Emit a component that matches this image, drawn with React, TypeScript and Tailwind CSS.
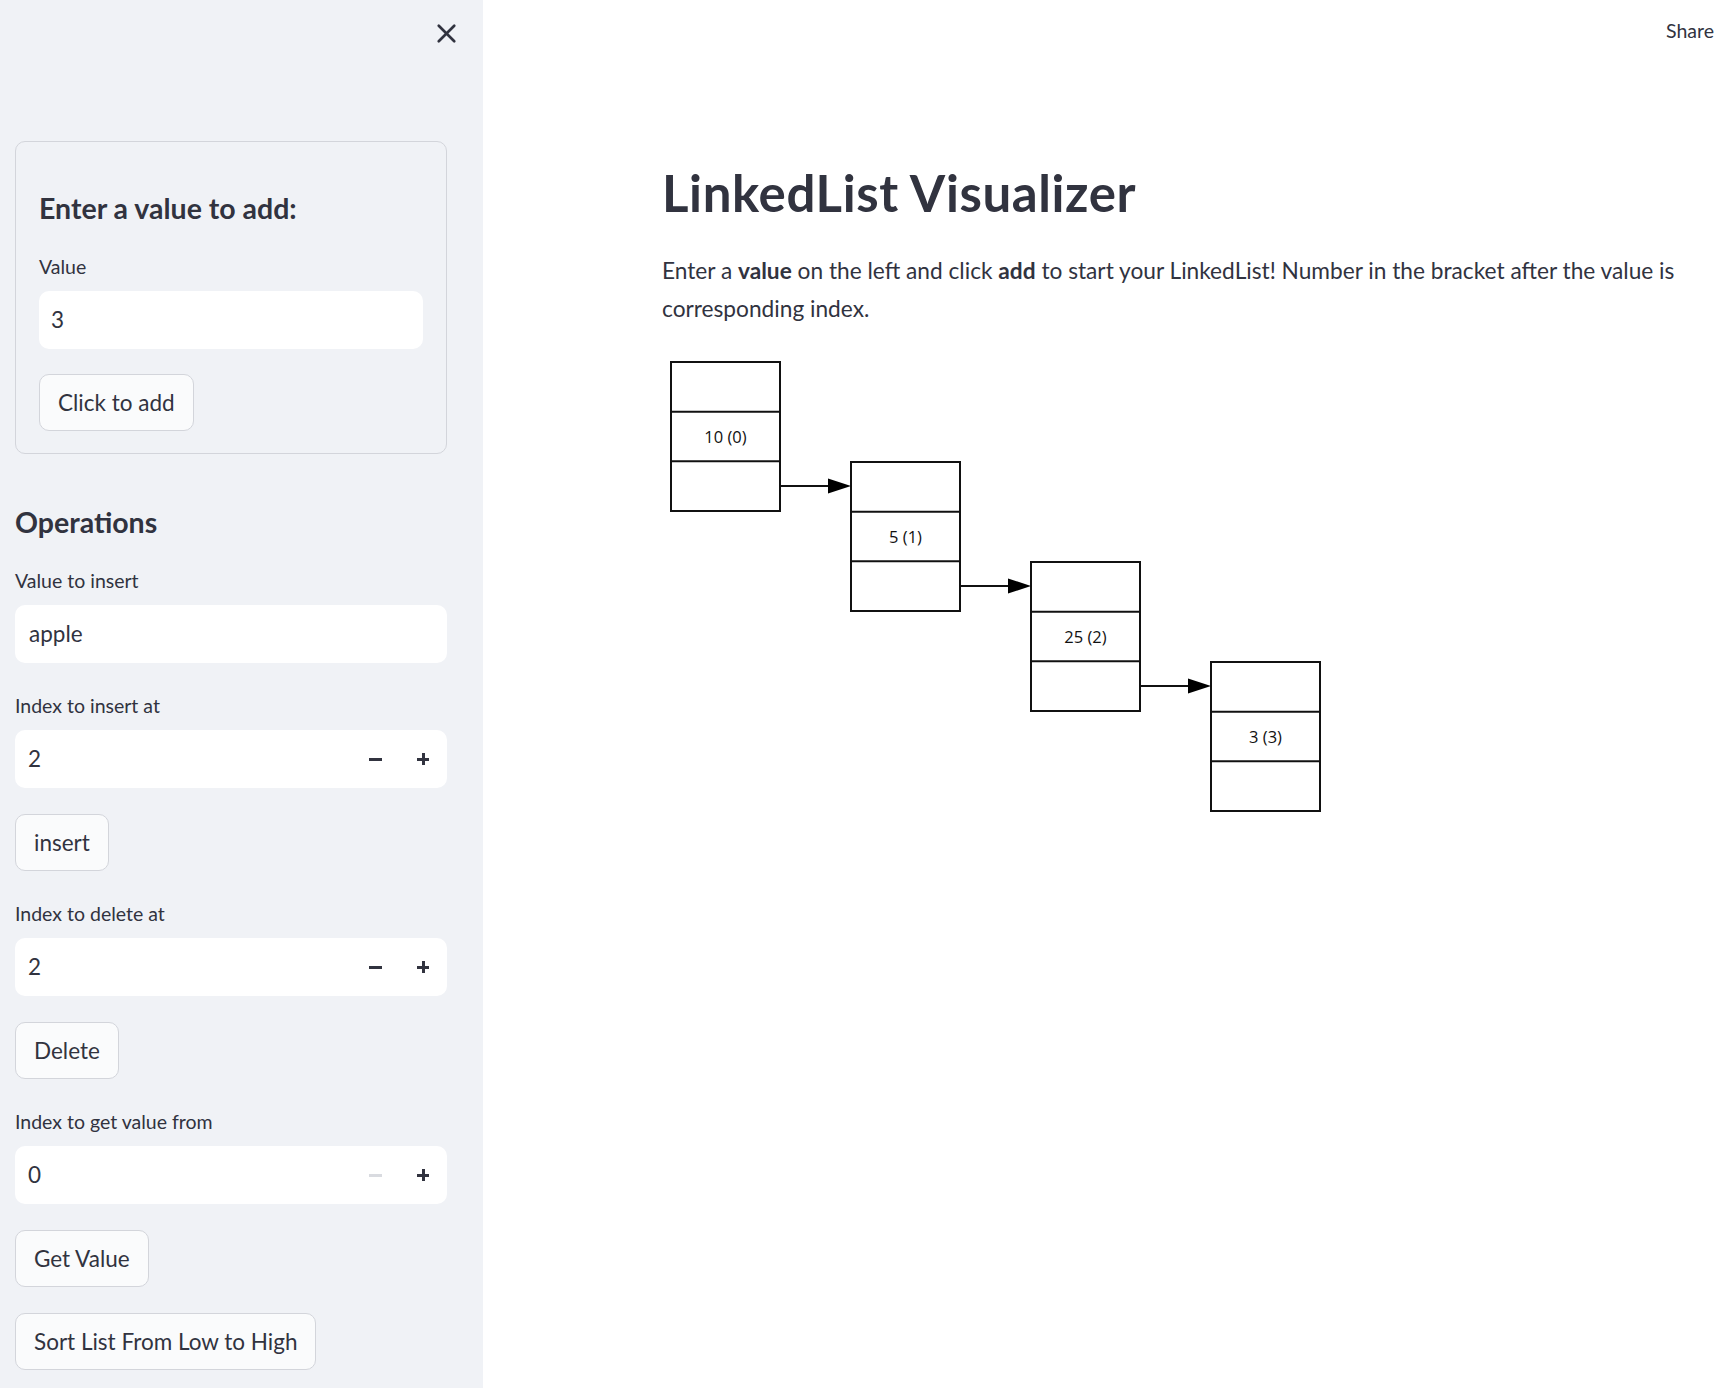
import { X } from "lucide-react";

const font = { fontFamily: "Lato, 'Noto Sans', sans-serif" };

const nodes = ["10 (0)", "5 (1)", "25 (2)", "3 (3)"];

const Label = ({ children }: { children: React.ReactNode }) => (
    <div className="text-[19.5px] leading-[34px] mb-[7px] text-[#31333f]">{children}</div>
);

const Button = ({ children }: { children: React.ReactNode }) => (
    <button className="self-start h-[57px] px-[18px] rounded-[10px] border border-[#d3d5db] bg-[#fafbfc] text-[22.5px] text-[#31333f]">
        {children}
    </button>
);

const NumberInput = ({ value, minDisabled }: { value: string; minDisabled?: boolean }) => (
    <div className="h-[58px] rounded-[10px] bg-white flex items-center pl-[13px] pr-[12px]">
        <span className="flex-1 text-[22.5px] text-[#31333f]">{value}</span>
        <span className="w-[48px] flex justify-center">
            <span className={`block w-[13px] h-[3px] ${minDisabled ? "bg-[#d9dbe0]" : "bg-[#31333f]"}`} />
        </span>
        <span className="w-[48px] flex justify-center relative -mr-[12px]">
            <span className="relative block w-[12px] h-[12px]">
                <span className="absolute left-0 top-[4.5px] w-[12px] h-[3px] bg-[#31333f]" />
                <span className="absolute top-0 left-[4.5px] w-[3px] h-[12px] bg-[#31333f]" />
            </span>
        </span>
    </div>
);

const Diagram = () => (
    <svg width="670" height="470" viewBox="0 0 670 470">
        {nodes.map((label, i) => {
            const x = 9 + 180 * i;
            const y = 10 + 100 * i;
            const c = 149 / 3;
            return (
                <g key={label}>
                    <rect x={x} y={y} width={109} height={149} fill="white" stroke="#111" strokeWidth={2} />
                    <line x1={x} x2={x + 109} y1={y + c} y2={y + c} stroke="#111" strokeWidth={2} />
                    <line x1={x} x2={x + 109} y1={y + 2 * c} y2={y + 2 * c} stroke="#111" strokeWidth={2} />
                    <text
                        x={x + 54.5}
                        y={y + 1.5 * c + 6}
                        textAnchor="middle"
                        fontSize="16.5"
                        fill="#111"
                        style={{ fontFamily: "'Open Sans', sans-serif" }}
                    >
                        {label}
                    </text>
                    {i < nodes.length - 1 && (
                        <g>
                            <line x1={x + 109} x2={x + 160} y1={y + 124} y2={y + 124} stroke="#111" strokeWidth={2} />
                            <polygon
                                points={`${x + 157},${y + 116.5} ${x + 180},${y + 124} ${x + 157},${y + 131.5}`}
                                fill="#000"
                            />
                        </g>
                    )}
                </g>
            );
        })}
    </svg>
);

export default function App() {
    return (
        <div className="flex min-h-screen text-[#31333f]" style={font}>
            <aside className="w-[483px] shrink-0 bg-[#f0f2f6] pl-[15px] pr-[36px] pb-[20px]">
                <div className="h-[66px] flex items-center justify-end -mr-[15px]">
                    <X size={31} strokeWidth={2.1} className="text-[#31333f]" />
                </div>

                <div className="mt-[75px] border border-[#d3d5db] rounded-[10px] px-[23px] pt-[48px] pb-[22px] flex flex-col">
                    <h3 className="text-[28.5px] leading-[36px] font-bold mb-[24px]">Enter a value to add:</h3>
                    <Label>Value</Label>
                    <div className="h-[58px] rounded-[10px] bg-white flex items-center px-[12px] text-[22.5px]">3</div>
                    <div className="mt-[25px] flex">
                        <Button>Click to add</Button>
                    </div>
                </div>

                <h3 className="mt-[50px] text-[28.5px] leading-[36px] font-bold mb-[24px]">Operations</h3>

                <div className="flex flex-col gap-[26px]">
                    <div>
                        <Label>Value to insert</Label>
                        <div className="h-[58px] rounded-[10px] bg-white flex items-center px-[14px] text-[22.5px]">apple</div>
                    </div>
                    <div>
                        <Label>Index to insert at</Label>
                        <NumberInput value="2" />
                    </div>
                    <Button>insert</Button>
                    <div>
                        <Label>Index to delete at</Label>
                        <NumberInput value="2" />
                    </div>
                    <Button>Delete</Button>
                    <div>
                        <Label>Index to get value from</Label>
                        <NumberInput value="0" minDisabled />
                    </div>
                    <Button>Get Value</Button>
                    <Button>Sort List From Low to High</Button>
                </div>
            </aside>

            <main className="flex-1 bg-white flex flex-col">
                <div className="h-[61px] flex items-center justify-end pr-[11px]">
                    <span className="text-[19.5px]">Share</span>
                </div>
                <div className="pl-[179px] pt-[102px] w-[1220px]">
                    <h1 className="text-[51px] leading-[60px] font-bold tracking-[0.6px]">LinkedList Visualizer</h1>
                    <p className="mt-[29px] text-[22.7px] leading-[38px]">
                        Enter a <b>value</b> on the left and click <b>add</b> to start your LinkedList! Number in the bracket
                        after the value is corresponding index.
                    </p>
                    <div className="mt-[24px]">
                        <Diagram />
                    </div>
                </div>
            </main>
        </div>
    );
}
